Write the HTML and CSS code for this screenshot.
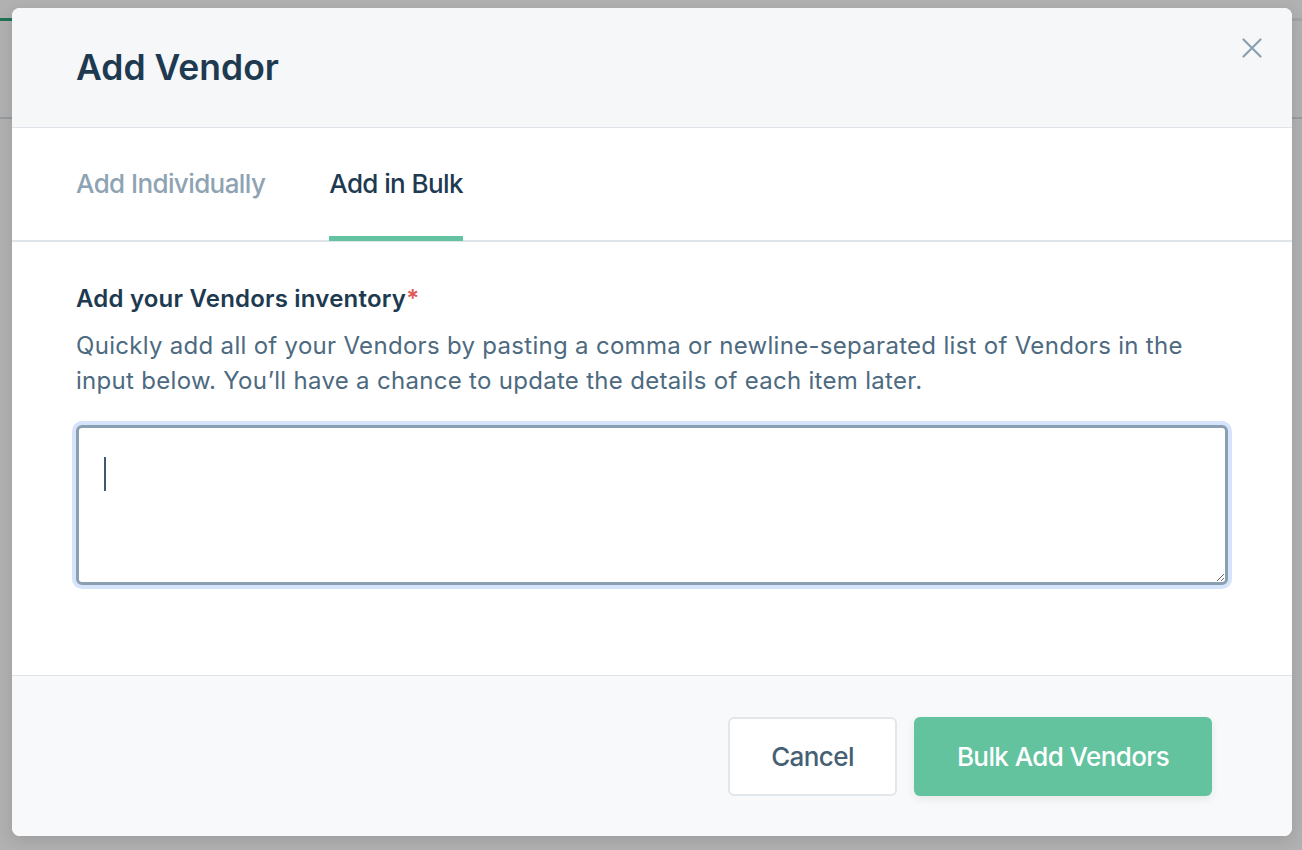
FILE: index.html
```html
<!DOCTYPE html>
<html>
<head>
<meta charset="utf-8">
<link rel="stylesheet" href="styles.css">
</head>
<body>
<div class="page">
  <div class="page-topline"></div>
  <div class="page-midline"></div>
</div>
<div class="backdrop">
  <div class="modal">
    <div class="modal-header">
      <h1 class="title">Add Vendor</h1>
      <button class="close" aria-label="Close">
        <svg width="20" height="20" viewBox="0 0 20 20"><path d="M1.5 1.5 L18.5 18.5 M18.5 1.5 L1.5 18.5" stroke="#8aa1b1" stroke-width="2.2" stroke-linecap="round" fill="none"/></svg>
      </button>
    </div>
    <div class="tabs">
      <div class="tab">Add Individually</div>
      <div class="tab active">Add in Bulk</div>
    </div>
    <div class="modal-body">
      <div class="label">Add your Vendors inventory<span class="req">*</span></div>
      <p class="desc">Quickly add all of your Vendors by pasting a comma or newline-separated list of Vendors in the input below. You’ll have a chance to update the details of each item later.</p>
      <div class="field">
        <textarea class="input"></textarea>
        <span class="caret"></span>
      </div>
    </div>
    <div class="modal-footer">
      <button class="btn btn-secondary">Cancel</button>
      <button class="btn btn-primary">Bulk Add Vendors</button>
    </div>
  </div>
</div>
</body>
</html>
```
FILE: styles.css
```css
html, body {
  margin: 0;
  padding: 0;
  width: 1302px;
  height: 850px;
  overflow: hidden;
  font-family: "Inter", "Liberation Sans", Arial, sans-serif;
}
.page {
  position: absolute;
  inset: 0;
  background: #fff;
}
.page-topline {
  position: absolute;
  left: 0; top: 18px;
  width: 1302px; height: 3px;
  background: linear-gradient(90deg, #1f9e6e 0 40px, #e6e9ec 40px);
}
.page-midline {
  position: absolute;
  left: 0; top: 117px;
  width: 1302px; height: 2px;
  background: #d8dde2;
}
.backdrop {
  position: absolute;
  inset: 0;
  background: rgba(40, 40, 40, 0.36);
  display: flex;
  padding: 8px 0 0 12px;
  box-sizing: border-box;
}
.modal {
  width: 1280px;
  height: 828px;
  background: #fff;
  border-radius: 8px;
  overflow: hidden;
  display: flex;
  flex-direction: column;
  box-shadow: 0 4px 16px rgba(0,0,0,0.12);
}
.modal-header {
  height: 119px;
  background: #f5f7f9;
  border-bottom: 1px solid #dde3e8;
  position: relative;
  display: flex;
  align-items: center;
  padding: 0 64px;
  flex: none;
}
.title {
  margin: 0;
  font-size: 35.5px;
  font-weight: 600;
  color: #1e3a51;
  letter-spacing: 0;
}
.close {
  position: absolute;
  top: 30px;
  right: 30px;
  border: 0;
  background: none;
  padding: 0;
  width: 20px;
  height: 20px;
  display: block;
}
.close svg { display: block; }
.tabs {
  height: 112px;
  border-bottom: 2px solid #dfe4e9;
  display: flex;
  gap: 64px;
  padding: 0 64px;
  flex: none;
}
.tab {
  font-size: 26px;
  font-weight: 500;
  color: #8ea3b3;
  display: flex;
  align-items: center;
  padding-top: 2px;
  box-sizing: border-box;
  letter-spacing: -0.6px;
  border-bottom: 5px solid transparent;
  margin-bottom: -1px;
}
.tab.active {
  color: #1e3a51;
  border-bottom-color: #63c29f;
}
.modal-body {
  flex: 1;
  padding: 42px 64px 0;
  border-bottom: 1px solid #dfe4e9;
}
.label {
  font-size: 24px;
  font-weight: 600;
  color: #1e3a51;
  line-height: 30px;
  letter-spacing: 0.2px;
}
.req {
  color: #e05a5a;
}
.desc {
  margin: 14px 0 0;
  font-size: 24px;
  line-height: 35px;
  color: #4d6a80;
  letter-spacing: 0.3px;
}
.field {
  position: relative;
  margin-top: 27px;
}
.input {
  display: block;
  width: 100%;
  height: 160px;
  box-sizing: border-box;
  border: 3px solid #8aa0b1;
  border-radius: 6px;
  box-shadow: 0 0 0 4px #d6e4fb;
  outline: none;
  resize: vertical;
  background: #fff;
  font-family: inherit;
  font-size: 22px;
}
.caret {
  position: absolute;
  left: 28px;
  top: 32px;
  width: 2px;
  height: 34px;
  background: #3e5a70;
}
.modal-footer {
  height: 160px;
  background: #f8f9fb;
  display: flex;
  align-items: center;
  justify-content: flex-end;
  gap: 17px;
  padding: 0 80px 0 0;
  flex: none;
}
.btn {
  height: 79px;
  border-radius: 6px;
  font-family: inherit;
  font-size: 26px;
  font-weight: 500;
  letter-spacing: -0.6px;
  cursor: pointer;
  padding: 0;
  box-sizing: border-box;
}
.btn-secondary {
  width: 169px;
  background: #fff;
  border: 2px solid #e2e7ec;
  color: #465f74;
}
.btn-primary {
  width: 298px;
  background: #63c39f;
  border: 0;
  color: #fff;
  box-shadow: 0 3px 8px rgba(0,0,0,0.08);
}
```
